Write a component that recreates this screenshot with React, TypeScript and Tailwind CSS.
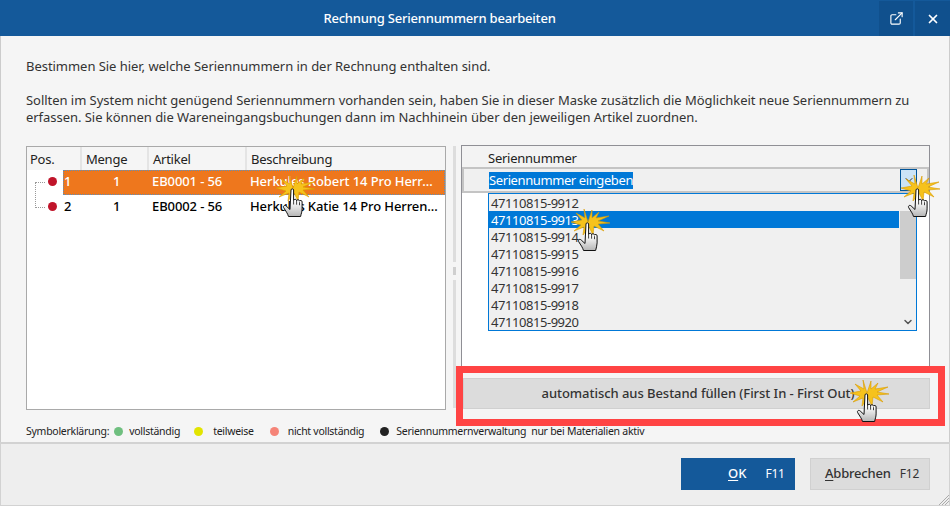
import { ExternalLink, X, ChevronDown } from 'lucide-react';

const serials = ['9912', '9913', '9914', '9915', '9916', '9917', '9918', '9920'];

const legend = [
  { color: 'bg-[#6fbf7f]', label: 'vollständig', dotGap: 'ml-[5px]', gap: 'ml-[6px]' },
  { color: 'bg-[#e2e400]', label: 'teilweise', dotGap: 'ml-[14px]', gap: 'ml-[10px]' },
  { color: 'bg-[#f58478]', label: 'nicht vollständig', dotGap: 'ml-[16px]', gap: 'ml-[9px]' },
  { color: 'bg-[#222222]', label: 'Seriennummernverwaltung  nur bei Materialien aktiv', dotGap: 'ml-[16px]', gap: 'ml-[7px]' },
];

// click marker: yellow star burst with a hand on top
const ClickHand = ({ className }: { className: string }) => (
  <svg className={`absolute ${className}`} width="50" height="50" viewBox="0 0 50 50">
    <polygon
      points="25,15 29,3 29,11 36,5 33,11 46,9 35,14 47,16 35,17 41,24 31,19 30,28 26,20 20,28 21,20 11,24 18,18 8,15 19,13 13,6 22,11 21,2"
      fill="#f6c21c"
      stroke="#d99a00"
      strokeWidth="0.6"
    />
    <path
      d="M23 17c0-1.600 2.600-1.600 2.600 0v10.500c.3-1.700 3-1.700 3 .2 .3-1.500 2.900-1.300 2.900 .5 .5-1.200 2.600-1 2.600 .7v7c0 3-1 5-1.500 7.600h-12.100c-.8-3-2.800-5.500-4.800-8.800-1-1.700 .9-3.200 2.500-1.700l3.800 3.500z"
      fill="url(#handfill)"
      stroke="#111111"
      strokeWidth="1"
      strokeLinejoin="round"
    />
    <path d="M25.600 27.500v4M28.600 27.700v4M31.500 29.200v3" stroke="#111111" strokeWidth="0.8" />
    <defs>
      <linearGradient id="handfill" x1="0" y1="0" x2="0" y2="1">
        <stop offset="0.45" stopColor="#ffffff" />
        <stop offset="1" stopColor="#b5b5b5" />
      </linearGradient>
    </defs>
  </svg>
);

const TreeRow = ({ pos, artikel, text, selected, last }: { pos: string; artikel: string; text: string; selected?: boolean; last?: boolean }) => (
  <div className="flex h-[25px] text-[13px] font-medium tracking-[-0.1px] text-black">
    <div className="relative w-[36px] shrink-0">
      <div className={`absolute left-[8px] w-[10px] border-b border-l border-dotted border-[#999999] ${last ? '-top-[13px] h-[26px]' : 'top-[12px] h-[1px] border-l-0'}`} />
      <div className="absolute left-[21px] top-[7px] h-[9px] w-[9px] rounded-full bg-[#c0142a]" />
    </div>
    <div className={`flex min-w-0 flex-1 leading-[21px] ${selected ? 'border border-dotted border-[#5b8fc0] bg-[#ee771d] text-white' : 'border border-transparent'}`}>
      <div className="w-[22px] shrink-0">{pos}</div>
      <div className="w-[64px] shrink-0 pl-[27px]">1</div>
      <div className="w-[97px] shrink-0 pl-[2px]">{artikel}</div>
      <div className="min-w-0 flex-1 truncate pl-[3px] pr-[5px]">{text}</div>
    </div>
  </div>
);

export default function App() {
  return (
    <div
      className="relative flex h-[506px] w-[950px] flex-col overflow-hidden bg-[#f5f5f5] text-[13px] text-[#333333]"
      style={{ fontFamily: '"Noto Sans", "Open Sans", sans-serif' }}
    >
      {/* title bar */}
      <div className="flex h-[36px] shrink-0 items-stretch bg-[#14599a] pt-[1px] text-white">
        <div className="flex-1 text-center text-[13px] font-medium leading-[35px] tracking-[-0.2px]">Rechnung Seriennummern bearbeiten</div>
        <div className="flex w-[34px] items-center justify-center bg-[#10508d]">
          <ExternalLink size={15} strokeWidth={1.8} />
        </div>
        <div className="ml-[2px] flex w-[35px] items-center justify-center bg-[#10508d]">
          <X size={14} strokeWidth={3} />
        </div>
      </div>

      {/* body */}
      <div className="flex min-h-0 flex-1 flex-col border-x border-[#cccccc] pl-[25px] pr-[19px]">
        <p className="mt-[22px] leading-[17px] tracking-[-0.04px]">Bestimmen Sie hier, welche Seriennummern in der Rechnung enthalten sind.</p>
        <p className="mt-[17px] leading-[17px] tracking-[-0.04px]">
          Sollten im System nicht genügend Seriennummern vorhanden sein, haben Sie in dieser Maske zusätzlich die Möglichkeit neue Seriennummern zu
          <br />
          erfassen. Sie können die Wareneingangsbuchungen dann im Nachhinein über den jeweiligen Artikel zuordnen.
        </p>

        <div className="mt-[20px] flex h-[264px]">
          {/* left table */}
          <div className="w-[420px] shrink-0 border border-[#a9a9a9] bg-white">
            <div className="flex h-[23px] bg-[#f5f5f5] leading-[24px] tracking-[-0.25px] text-[#222222]">
              <div className="w-[55px] border-r-2 border-[#e4e4e4] pl-[3px]">Pos.</div>
              <div className="w-[67px] border-r-2 border-[#e4e4e4] pl-[4px]">Menge</div>
              <div className="w-[98px] border-r-2 border-[#e4e4e4] pl-[4px]">Artikel</div>
              <div className="flex-1 pl-[4px]">Beschreibung</div>
            </div>
            <TreeRow pos="1" artikel="EB0001 - 56" text="Herkules Robert 14 Pro Herren Pedelec 28 Zoll" selected />
            <TreeRow pos="2" artikel="EB0002 - 56" text="Herkules Katie 14 Pro Herren Pedelec 28 Zoll" last />
          </div>

          {/* splitter */}
          <div className="ml-[7px] flex w-[8px] shrink-0 flex-col items-start">
            <div className="relative h-[262px] w-[3px] bg-[#dddddd]">
              <div className="absolute left-0 top-[116px] h-[18px] w-[3px] border-y-[5px] border-[#f5f5f5] bg-[#cfcfcf]" />
            </div>
          </div>

          {/* right panel */}
          <div className="-mt-[1px] flex min-w-0 flex-1 flex-col">
            <div className="h-[226px] border border-b-0 border-[#8f8f95] bg-white">
              <div className="h-[23px] border-b-2 border-[#c4c4c4] bg-[#f3f3f3] pl-[26px] leading-[25px] tracking-[-0.25px] text-[#222222]">Seriennummer</div>
              <div className="flex h-[24px] items-center border-2 border-t-0 border-[#c4c4c4] bg-[#f0f0f0] pl-[25px] pr-[10px]">
                <span className="bg-[#0078d7] leading-[17px] tracking-[-0.4px] text-white">Seriennummer eingeben</span>
                <div className="ml-auto flex h-[22px] w-[17px] items-center justify-center border border-[#005499] bg-[#cce4f7]">
                  <ChevronDown size={12} className="text-[#333333]" />
                </div>
              </div>
              <div className="ml-[26px] mr-[12px] flex h-[138px] border border-[#0078d7] bg-[#f0f0f0] leading-[19px]">
                <div className="min-w-0 flex-1">
                  {serials.map((s) => (
                    <div key={s} className={`h-[17px] pl-[2px] tracking-[-0.45px] ${s === '9913' ? 'bg-[#0078d7] text-white' : 'text-[#333333]'}`}>
                      47110815-{s}
                    </div>
                  ))}
                </div>
                <div className="flex w-[17px] shrink-0 flex-col bg-[#f0f0f0]">
                  <div className="ml-[1px] mt-[17px] h-[68px] bg-[#cdcdcd]" />
                  <ChevronDown size={12} strokeWidth={3} className="ml-[3px] mt-auto mb-[2px] text-[#555555]" />
                </div>
              </div>
            </div>
            <div className="ml-[2px] mt-[7px] flex h-[31px] items-center justify-center border border-[#d0d0d0] bg-[#dcdcdc] pl-[3px] font-medium tracking-[-0.05px] text-[#333333]">
              automatisch aus Bestand füllen (First In - First Out)
            </div>
          </div>
        </div>

        {/* legend */}
        <div className="mt-[13px] flex items-center text-[10.5px] leading-[16px] tracking-[-0.27px] text-[#222222]">
          <span>Symbolerklärung:</span>
          {legend.map((l) => (
            <div key={l.label} className="flex items-center">
              <div className={`${l.dotGap} h-[9px] w-[9px] rounded-full ${l.color}`} />
              <span className={`${l.gap} whitespace-pre`}>{l.label}</span>
            </div>
          ))}
        </div>
      </div>

      {/* footer */}
      <div className="relative flex h-[64px] shrink-0 items-start justify-end gap-[15px] border border-t-2 border-[#d2d2d2] bg-[#eeeeee] pr-[19px] pt-[14px]">
        <div className="flex h-[32px] w-[114px] items-center bg-[#14599a] pl-[47px] font-medium text-white">
          <span className="underline underline-offset-2">O</span>K<span className="ml-[19px] text-[12px] font-normal tracking-[-0.2px]">F11</span>
        </div>
        <div className="flex h-[32px] w-[120px] items-center border border-[#d0d0d0] bg-[#dcdcdc] pl-[14px] font-medium tracking-[-0.2px] text-[#333333]">
          <span className="underline underline-offset-2">A</span>bbrechen<span className="ml-[9px] text-[12px] font-normal">F12</span>
        </div>
        <svg className="absolute bottom-0 right-0" width="11" height="11" viewBox="0 0 11 11" stroke="#aaaaaa" strokeWidth="1">
          <path d="M1 11L11 1M4 11L11 4M7 11L11 7" />
        </svg>
      </div>

      {/* overlays */}
      <div className="absolute left-[456px] top-[366px] h-[60px] w-[489px] border-[7px] border-[#ff4444]" />
      <ClickHand className="left-[268px] top-[173px]" />
      <ClickHand className="left-[563px] top-[207px]" />
      <ClickHand className="left-[893px] top-[173px]" />
      <ClickHand className="left-[842px] top-[378px]" />
    </div>
  );
}
